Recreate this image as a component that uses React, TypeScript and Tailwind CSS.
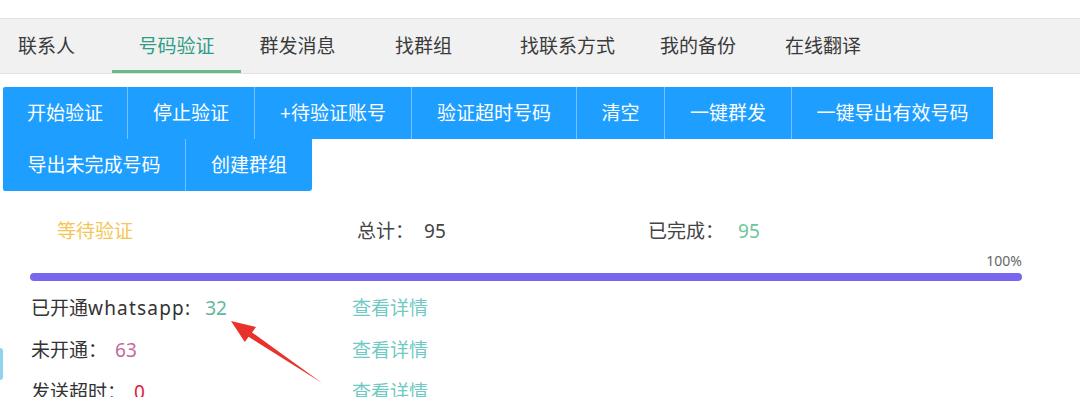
const tabs = [
  { label: '联系人', cls: 'w-[93px]' },
  { label: '号码验证', cls: 'ml-[19px] w-[129px]', active: true },
  { label: '群发消息', cls: 'w-[113px]' },
  { label: '找群组', cls: 'w-[139px]' },
  { label: '找联系方式', cls: 'w-[149px]' },
  { label: '我的备份', cls: 'w-[112px]' },
  { label: '在线翻译', cls: 'w-[138px]' },
];

const row1 = [
  { label: '开始验证', cls: 'w-[125px] rounded-tl-[2px]' },
  { label: '停止验证', cls: 'w-[127px]' },
  { label: '+待验证账号', cls: 'w-[157px]' },
  { label: '验证超时号码', cls: 'w-[165px]' },
  { label: '清空', cls: 'w-[88px]' },
  { label: '一键群发', cls: 'w-[127px]' },
  { label: '一键导出有效号码', cls: 'w-[201px] border-r-0' },
];

const row2 = [
  { label: '导出未完成号码', cls: 'w-[183px] rounded-bl-[2px]' },
  { label: '创建群组', cls: 'w-[126px] border-r-0 rounded-br-[3px]' },
];

const results = [
  { label: '已开通', latin: 'whatsapp:', value: '32', color: 'text-[#62b7a2]', gap: 'ml-[14px]' },
  { label: '未开通：', value: '63', color: 'text-[#c4699a]', gap: 'ml-[8px]' },
  { label: '发送超时：', value: '0', color: 'text-[#e0203c]', gap: 'ml-[8px]' },
];

function ActionButton({ label, cls }: { label: string; cls: string }) {
  return (
    <button className={`h-[52px] shrink-0 bg-[#1e9fff] text-white text-[19px] leading-none border-r border-[#74c2ff] ${cls}`}>
      {label}
    </button>
  );
}

export default function App() {
  return (
    <div className="relative w-[1080px] h-[397px] overflow-hidden bg-white text-[#333] font-['Noto_Sans','Noto_Sans_CJK_SC',sans-serif]">
      <div className="h-[18px]" />

      {/* tabs */}
      <div className="flex h-[56px] bg-[#f1f1f1] border-y border-[#e3e3e3]">
        {tabs.map((t) => (
          <div
            key={t.label}
            className={`flex shrink-0 items-center justify-center pt-[3px] border-b-[3px] text-[19px] ${t.cls} ${
              t.active ? 'border-[#6bb98a] text-[#2f9c86]' : 'border-transparent text-[#3a3a3a]'
            }`}
          >
            {t.label}
          </div>
        ))}
      </div>

      {/* action buttons */}
      <div className="mt-[13px] pl-[3px]">
        <div className="flex">
          {row1.map((b) => (
            <ActionButton key={b.label} {...b} />
          ))}
        </div>
        <div className="flex">
          {row2.map((b) => (
            <ActionButton key={b.label} {...b} />
          ))}
        </div>
      </div>

      {/* summary */}
      <div className="flex pt-[26px] h-[54px] text-[19px] leading-[28px]">
        <div className="w-[357px] pl-[57px] text-[#f5c656]">等待验证</div>
        <div className="w-[291px] flex">
          <span className="text-[#444]">总计：</span>
          <span className="ml-[10px] text-[#444]">95</span>
        </div>
        <div className="flex">
          <span className="text-[#444]">已完成：</span>
          <span className="ml-[14px] text-[#6cc79a]">95</span>
        </div>
      </div>

      <div className="mt-[6px] w-[1022px] text-right text-[14px] leading-[20px] text-[#666]">100%</div>
      <div className="mt-[2px] ml-[30px] w-[992px] h-[8px] rounded-full bg-[#7667ee]" />

      {/* results */}
      <div className="mt-[6px] text-[19px] leading-[42px]">
        {results.map((r) => (
          <div key={r.label} className="flex h-[42px]">
            <div className="w-[352px] pl-[31px] flex">
              <span className="text-[#333]">
                {r.label}
                {r.latin && <span className="tracking-[1.2px]">{r.latin}</span>}
              </span>
              <span className={`${r.gap} ${r.color}`}>{r.value}</span>
            </div>
            <span className="text-[#6fcac4]">查看详情</span>
          </div>
        ))}
      </div>

      {/* edge of a side widget */}
      <div className="absolute left-0 top-[348px] w-[3px] h-[32px] rounded-r-sm bg-[#8fd3ef]" />

      {/* annotation arrow */}
      <svg className="absolute inset-0 pointer-events-none" width="1080" height="397">
        <polygon
          points="231,321 256,327 252,332.4 322,383 248.6,336.8 244.8,342"
          fill="#e8322b"
        />
      </svg>
    </div>
  );
}
